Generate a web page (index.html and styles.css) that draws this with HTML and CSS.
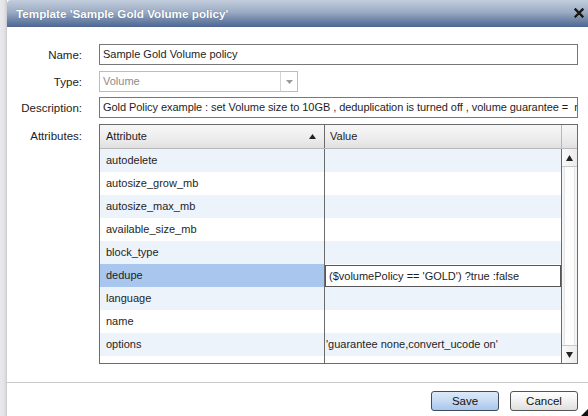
FILE: index.html
```html
<!DOCTYPE html>
<html>
<head>
<meta charset="utf-8">
<link rel="stylesheet" href="styles.css">
</head>
<body>
<div class="screen">
  <div class="backdrop"></div>
  <div class="dialog">
    <div class="titlebar">
      <span class="title">Template 'Sample Gold Volume policy'</span>
      <svg class="close" width="10" height="10" viewBox="0 0 10 10"><path d="M1.5 1.5 L8.5 8.5 M8.5 1.5 L1.5 8.5" stroke="#1b1b1b" stroke-width="2.6" stroke-linecap="square"/></svg>
    </div>
    <div class="content">
      <div class="form">
        <div class="label">Name:</div>
        <div class="input">Sample Gold Volume policy</div>
        <div class="label">Type:</div>
        <div class="select">
          <span class="select-text">Volume</span>
          <span class="select-btn"><svg width="7" height="4" viewBox="0 0 7 4"><path d="M0 0 H7 L3.5 4 Z" fill="#9a9a9a"/></svg></span>
        </div>
        <div class="label">Description:</div>
        <div class="input desc">Gold Policy example : set Volume size to 10GB , deduplication is turned off , volume guarantee =&nbsp; none</div>
        <div class="label top">Attributes:</div>
        <div class="grid">
          <div class="grid-head">
            <div class="hcell attr">Attribute<svg class="sort" width="7" height="5" viewBox="0 0 7 5"><path d="M0 5 H7 L3.5 0 Z" fill="#222"/></svg></div>
            <div class="hcell val">Value</div>
            <div class="hcell sb"></div>
          </div>
          <div class="grid-body">
            <div class="rows">
              <div class="row alt"><div class="cell attr">autodelete</div><div class="cell val"></div></div>
              <div class="row"><div class="cell attr">autosize_grow_mb</div><div class="cell val"></div></div>
              <div class="row alt"><div class="cell attr">autosize_max_mb</div><div class="cell val"></div></div>
              <div class="row"><div class="cell attr">available_size_mb</div><div class="cell val"></div></div>
              <div class="row alt"><div class="cell attr">block_type</div><div class="cell val"></div></div>
              <div class="row sel"><div class="cell attr">dedupe</div><div class="cell val"><div class="editor">($volumePolicy == 'GOLD') ?true :false</div></div></div>
              <div class="row alt"><div class="cell attr">language</div><div class="cell val"></div></div>
              <div class="row"><div class="cell attr">name</div><div class="cell val"></div></div>
              <div class="row alt"><div class="cell attr">options</div><div class="cell val tight">'guarantee none,convert_ucode on'</div></div>
            </div>
            <div class="scrollbar">
              <div class="sb-btn"><svg width="7" height="6" viewBox="0 0 7 6"><path d="M0 6 H7 L3.5 0 Z" fill="#222"/></svg></div>
              <div class="sb-track"></div>
              <div class="sb-btn"><svg width="7" height="6" viewBox="0 0 7 6"><path d="M0 0 H7 L3.5 6 Z" fill="#222"/></svg></div>
            </div>
          </div>
        </div>
      </div>
    </div>
    <div class="footer">
      <div class="btn save">Save</div>
      <div class="btn cancel">Cancel</div>
      <svg class="grip" width="7" height="7" viewBox="0 0 7 7"><path d="M7 0 V7 H0 Z" fill="#111"/></svg>
    </div>
  </div>
</div>
</body>
</html>
```
FILE: styles.css
```css
html, body {
  margin: 0;
  padding: 0;
  width: 588px;
  height: 416px;
  overflow: hidden;
  font-family: "Liberation Sans", Arial, sans-serif;
  font-size: 11px;
  color: #1e1e1e;
}
.screen {
  display: flex;
  width: 588px;
  height: 416px;
}
.backdrop {
  width: 7px;
  flex: none;
  background: linear-gradient(to right, #e9e9ed 0, #e4e4e8 4px, #d4d4d9 6px, #c8c8ce 7px);
}
.dialog {
  flex: 1;
  display: flex;
  flex-direction: column;
  background: #fff;
  border-top-left-radius: 4px;
  overflow: hidden;
  position: relative;
}
.titlebar {
  height: 27px;
  flex: none;
  display: flex;
  align-items: center;
  justify-content: space-between;
  padding: 0 4px 0 9px;
  background: linear-gradient(to bottom, #c3cedd 0%, #9aabc4 45%, #6e84a8 75%, #4d6792 100%);
}
.title {
  color: #fff;
  font-weight: bold;
  font-size: 11.7px;
  text-shadow: 0 0 1px rgba(40,60,90,0.6);
}
.close {
  margin-top: -2px;
  filter: drop-shadow(0 0 0.6px #fff);
}
.content {
  flex: 1;
  padding: 17px 10px 0 0;
}
.form {
  display: grid;
  grid-template-columns: 75px 479px;
  column-gap: 17px;
  row-gap: 6px;
  align-items: center;
}
.label {
  text-align: right;
  font-size: 11.5px;
  color: #222;
}
.label.top {
  align-self: start;
  line-height: 24px;
}
.input {
  height: 19px;
  border: 1px solid #777;
  line-height: 19px;
  padding-left: 3px;
  white-space: nowrap;
  overflow: hidden;
  background: #fff;
}
.desc {
  margin-top: -1px;
  letter-spacing: -0.06px;
}
.select {
  width: 197px;
  height: 19px;
  border: 1px solid #bdbdbd;
  display: flex;
  line-height: 19px;
  color: #8c8c8c;
  background: #fff;
}
.select-text {
  flex: 1;
  padding-left: 3px;
}
.select-btn {
  width: 16px;
  border-left: 1px solid #d4d4d4;
  display: flex;
  align-items: center;
  justify-content: center;
}
.grid {
  border: 1px solid #6b6b6b;
  height: 238px;
  display: flex;
  flex-direction: column;
}
.grid-head {
  height: 23px;
  flex: none;
  display: flex;
  border-bottom: 1px solid #b8b8b8;
  background: linear-gradient(to bottom, #f7f7f7 0%, #ececec 60%, #e0e0e0 100%);
}
.hcell {
  line-height: 23px;
  display: flex;
  align-items: center;
}
.hcell.attr {
  width: 218px;
  padding-left: 6px;
  border-right: 1px solid #6b6b6b;
  justify-content: space-between;
}
.sort {
  margin-right: 8px;
}
.hcell.val {
  flex: 1;
  padding-left: 5px;
}
.hcell.sb {
  width: 15px;
  border-left: 1px solid #b8b8b8;
}
.grid-body {
  flex: 1;
  display: flex;
}
.rows {
  flex: 1;
  background: linear-gradient(#6b6b6b, #6b6b6b) 224px 0 / 1px 100% no-repeat, #fff;
}
.row {
  height: 23px;
  display: flex;
}
.row.alt {
  background: #edf3fb;
}
.cell {
  line-height: 23px;
  white-space: nowrap;
  overflow: hidden;
}
.cell.attr {
  width: 218px;
  padding-left: 6px;
  border-right: 1px solid #6b6b6b;
}
.row.sel .cell.attr {
  background: #a9c7ee;
}
.cell.val {
  flex: 1;
  padding-left: 5px;
}
.cell.val.tight {
  padding-left: 1px;
}
.row.sel .cell.val {
  padding: 1px 0 0 0;
  display: flex;
}
.editor {
  flex: 1;
  height: 20px;
  line-height: 20px;
  border: 1px solid #555;
  padding-left: 3px;
  background: #fff;
}
.scrollbar {
  width: 15px;
  border-left: 1px solid #6b6b6b;
  display: flex;
  flex-direction: column;
  background: #f4f4f4;
}
.sb-btn {
  height: 17px;
  flex: none;
  display: flex;
  align-items: center;
  justify-content: center;
  background: linear-gradient(to right, #fafafa, #ececec);
  border-bottom: 1px solid #c8c8c8;
}
.sb-btn:last-child {
  border-bottom: none;
  border-top: 1px solid #c8c8c8;
}
.sb-track {
  flex: 1;
  margin: 0 2px 0 2px;
  background: #fdfdfd;
  border-left: 1px solid #e6e6e6;
  border-right: 1px solid #e6e6e6;
}
.footer {
  height: 34px;
  flex: none;
  border-top: 1px solid #c9c9c9;
  display: flex;
  justify-content: flex-end;
  align-items: flex-start;
  gap: 11px;
  padding: 8px 10px 0 0;
  box-sizing: border-box;
  position: relative;
}
.btn {
  width: 66px;
  height: 18px;
  line-height: 18px;
  text-align: center;
  border-radius: 3px;
  font-size: 11.5px;
  color: #111;
}
.btn.save {
  border: 1px solid #3f4c5e;
  background: linear-gradient(to bottom, #dce9f8 0%, #c5daf3 50%, #a9c6ec 100%);
}
.btn.cancel {
  border: 1px solid #555;
  background: linear-gradient(to bottom, #ffffff 0%, #f1f1f1 50%, #dedede 100%);
}
.grip {
  position: absolute;
  right: 0;
  bottom: 0;
}
```
